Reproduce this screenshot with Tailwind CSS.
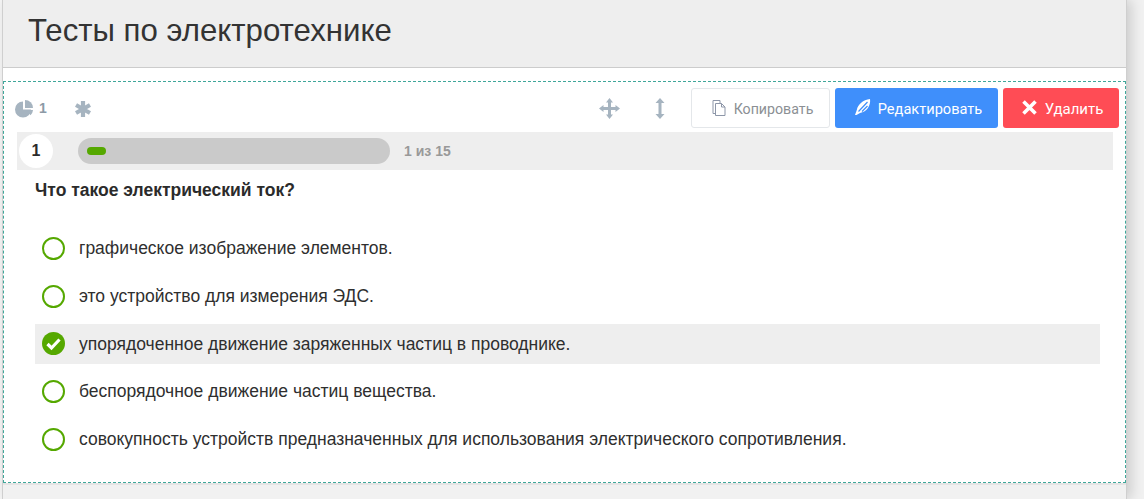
<!DOCTYPE html>
<html lang="ru">
<head>
<meta charset="utf-8">
<script src="https://cdn.jsdelivr.net/npm/@tailwindcss/browser@4"></script>
</head>
<body class="bg-[#f1f1f1] font-['Liberation_Sans',Arial,sans-serif]">
<div class="flex h-[499px] w-[1144px] overflow-hidden">
  <div class="w-[2px] shrink-0 bg-[#f6f6f6]"></div>
  <main class="w-[1125px] shrink-0 border-x border-[#cfcfcf] flex flex-col bg-[#f1f1f1] shadow-[4px_0_12px_rgba(0,0,0,0.16)]">
    <header class="h-[68px] shrink-0 bg-[#eeeeee] border-b border-[#cccccc] pl-[25px] pt-[13px]">
      <h1 class="text-[31.2px] leading-[36px] text-[#333333]">Тесты по электротехнике</h1>
    </header>
    <div class="h-[13px] shrink-0 bg-white"></div>
    <section class="h-[402px] shrink-0 bg-white border border-dashed border-[#3fa79a] px-[13px]">
      <div class="flex items-center h-[50px] pt-[3px]">
        <div class="flex items-center gap-[6px] w-[60px] ml-[-2px]">
          <svg class="w-[18px] h-[18px]" viewBox="0 0 18 18" fill="#a6b4c0"><path d="M8 1.500a8 8 0 1 0 8 8H8z"/><path d="M10 0a8 8 0 0 1 8 8h-8z"/><path d="M11.500 10H18a8 8 0 0 1-2.500 5.200z"/></svg>
          <span class="text-[14px] font-bold text-[#8c9aa6]">1</span>
        </div>
        <svg class="w-[16px] h-[16px]" viewBox="0 0 16 16" fill="none" stroke="#a6b4c0" stroke-width="4.200"><path d="M8 0v16M1 4l14 8M15 4L1 12"/></svg>
        <div class="ml-auto flex items-center mr-[-7px]">
          <svg class="w-[21px] h-[21px] mr-[35px]" viewBox="0 0 21 21" fill="#a6b4c0"><path d="M10.500 0l3.500 4.500h-2v4.500h4.500V7l4.500 3.500-4.500 3.500v-2H12v4.500h2L10.500 21 7 16.500h2V12H4.500v2L0 10.500 4.500 7v2H9V4.500H7z"/></svg>
          <svg class="w-[10px] h-[21px] mr-[26px]" viewBox="0 0 10 21" fill="#a6b4c0"><path d="M5 0l4.500 5h-3v11h3L5 21 .5 16h3V5h-3z"/></svg>
          <button class="w-[139px] h-[40px] mt-[-1px] pt-[4px] pl-[4px] rounded-[3px] border border-[#e4e7ea] bg-white flex items-center justify-center gap-[8px] font-['Roboto',sans-serif] text-[14.2px] text-[#8b8f94]">
            <svg class="w-[14px] h-[16px] mt-[-5px]" viewBox="0 0 14 16" fill="none" stroke="#8d96a8" stroke-width="1"><path d="M3.500 3.500h6l3.500 3.500v8.500H3.500zM9.500 3.500V7H13M3.500 13.500H1V.5h7v3"/></svg>
            Копировать
          </button>
          <button class="ml-[5px] w-[163px] h-[40px] mt-[-1px] pt-[4px] pl-[4px] rounded-[3px] bg-[#3f8ffb] flex items-center justify-center gap-[7px] font-['Roboto',sans-serif] text-[14.6px] text-white">
            <svg class="w-[16px] h-[16px] mt-[-6px]" viewBox="0 0 16 16"><path d="M0 16l1.800-5C3 5 8 1 15 0c1 6-3 13-10 14l-3.500 2z" fill="white"/><path d="M3.500 12.500L12.500 3M7 12.500l5.500-5.500" fill="none" stroke="#3f8ffb" stroke-width="1.200"/></svg>
            Редактировать
          </button>
          <button class="ml-[5px] w-[116px] h-[40px] mt-[-1px] pt-[3px] pl-[3px] rounded-[3px] bg-[#ff4c55] flex items-center justify-center gap-[8px] font-['Roboto',sans-serif] text-[15px] text-white">
            <svg class="w-[15px] h-[15px] mt-[-5px]" viewBox="0 0 15 15" fill="none" stroke="white" stroke-width="3.600"><path d="M1.500 1.500l12 12M13.500 1.500l-12 12"/></svg>
            Удалить
          </button>
        </div>
      </div>
      <div class="h-[38px] bg-[#eeeeee] w-[1096px] flex items-center pl-[2px] pr-[4px]">
        <div class="w-[34px] h-[34px] rounded-full bg-white flex items-center justify-center text-[16px] font-bold text-[#2b2b2b]">1</div>
        <div class="ml-[25px] w-[312px] h-[26px] rounded-full bg-[#cacaca] flex items-center pl-[9px]">
          <div class="w-[19px] h-[8px] rounded-full bg-[#55a800]"></div>
        </div>
        <span class="ml-[14px] text-[14px] font-bold text-[#999999]">1 из 15</span>
      </div>
      <h2 class="mt-[10px] ml-[18px] text-[17.5px] leading-[21px] font-bold text-[#2b2b2b]">Что такое электрический ток?</h2>
      <ul class="mt-[27.6px] ml-[18px] w-[1065px] flex flex-col gap-[8px] text-[17.5px] text-[#2f2f2f]">
        <li class="h-[39.67px] flex items-center pl-[7px] gap-[14px]"><span class="w-[23px] h-[23px] rounded-full border-2 border-[#55a800] shrink-0"></span>графическое изображение элементов.</li>
        <li class="h-[39.67px] flex items-center pl-[7px] gap-[14px]"><span class="w-[23px] h-[23px] rounded-full border-2 border-[#55a800] shrink-0"></span>это устройство для измерения ЭДС.</li>
        <li class="h-[39.67px] flex items-center pl-[7px] gap-[14px] bg-[#eeeeee]"><svg class="w-[23px] h-[23px] shrink-0" viewBox="0 0 23 23"><circle cx="11.500" cy="11.500" r="11.500" fill="#55a800"/><path d="M5.500 12l4 4 8-8.500" fill="none" stroke="white" stroke-width="3.200"/></svg>упорядоченное движение заряженных частиц в проводнике.</li>
        <li class="h-[39.67px] flex items-center pl-[7px] gap-[14px]"><span class="w-[23px] h-[23px] rounded-full border-2 border-[#55a800] shrink-0"></span>беспорядочное движение частиц вещества.</li>
        <li class="h-[39.67px] flex items-center pl-[7px] gap-[14px]"><span class="w-[23px] h-[23px] rounded-full border-2 border-[#55a800] shrink-0"></span>совокупность устройств предназначенных для использования электрического сопротивления.</li>
      </ul>
    </section>
    <div class="h-[2px] shrink-0 bg-[#e4e4e4]"></div>
  </main>
</div>
</body>
</html>
